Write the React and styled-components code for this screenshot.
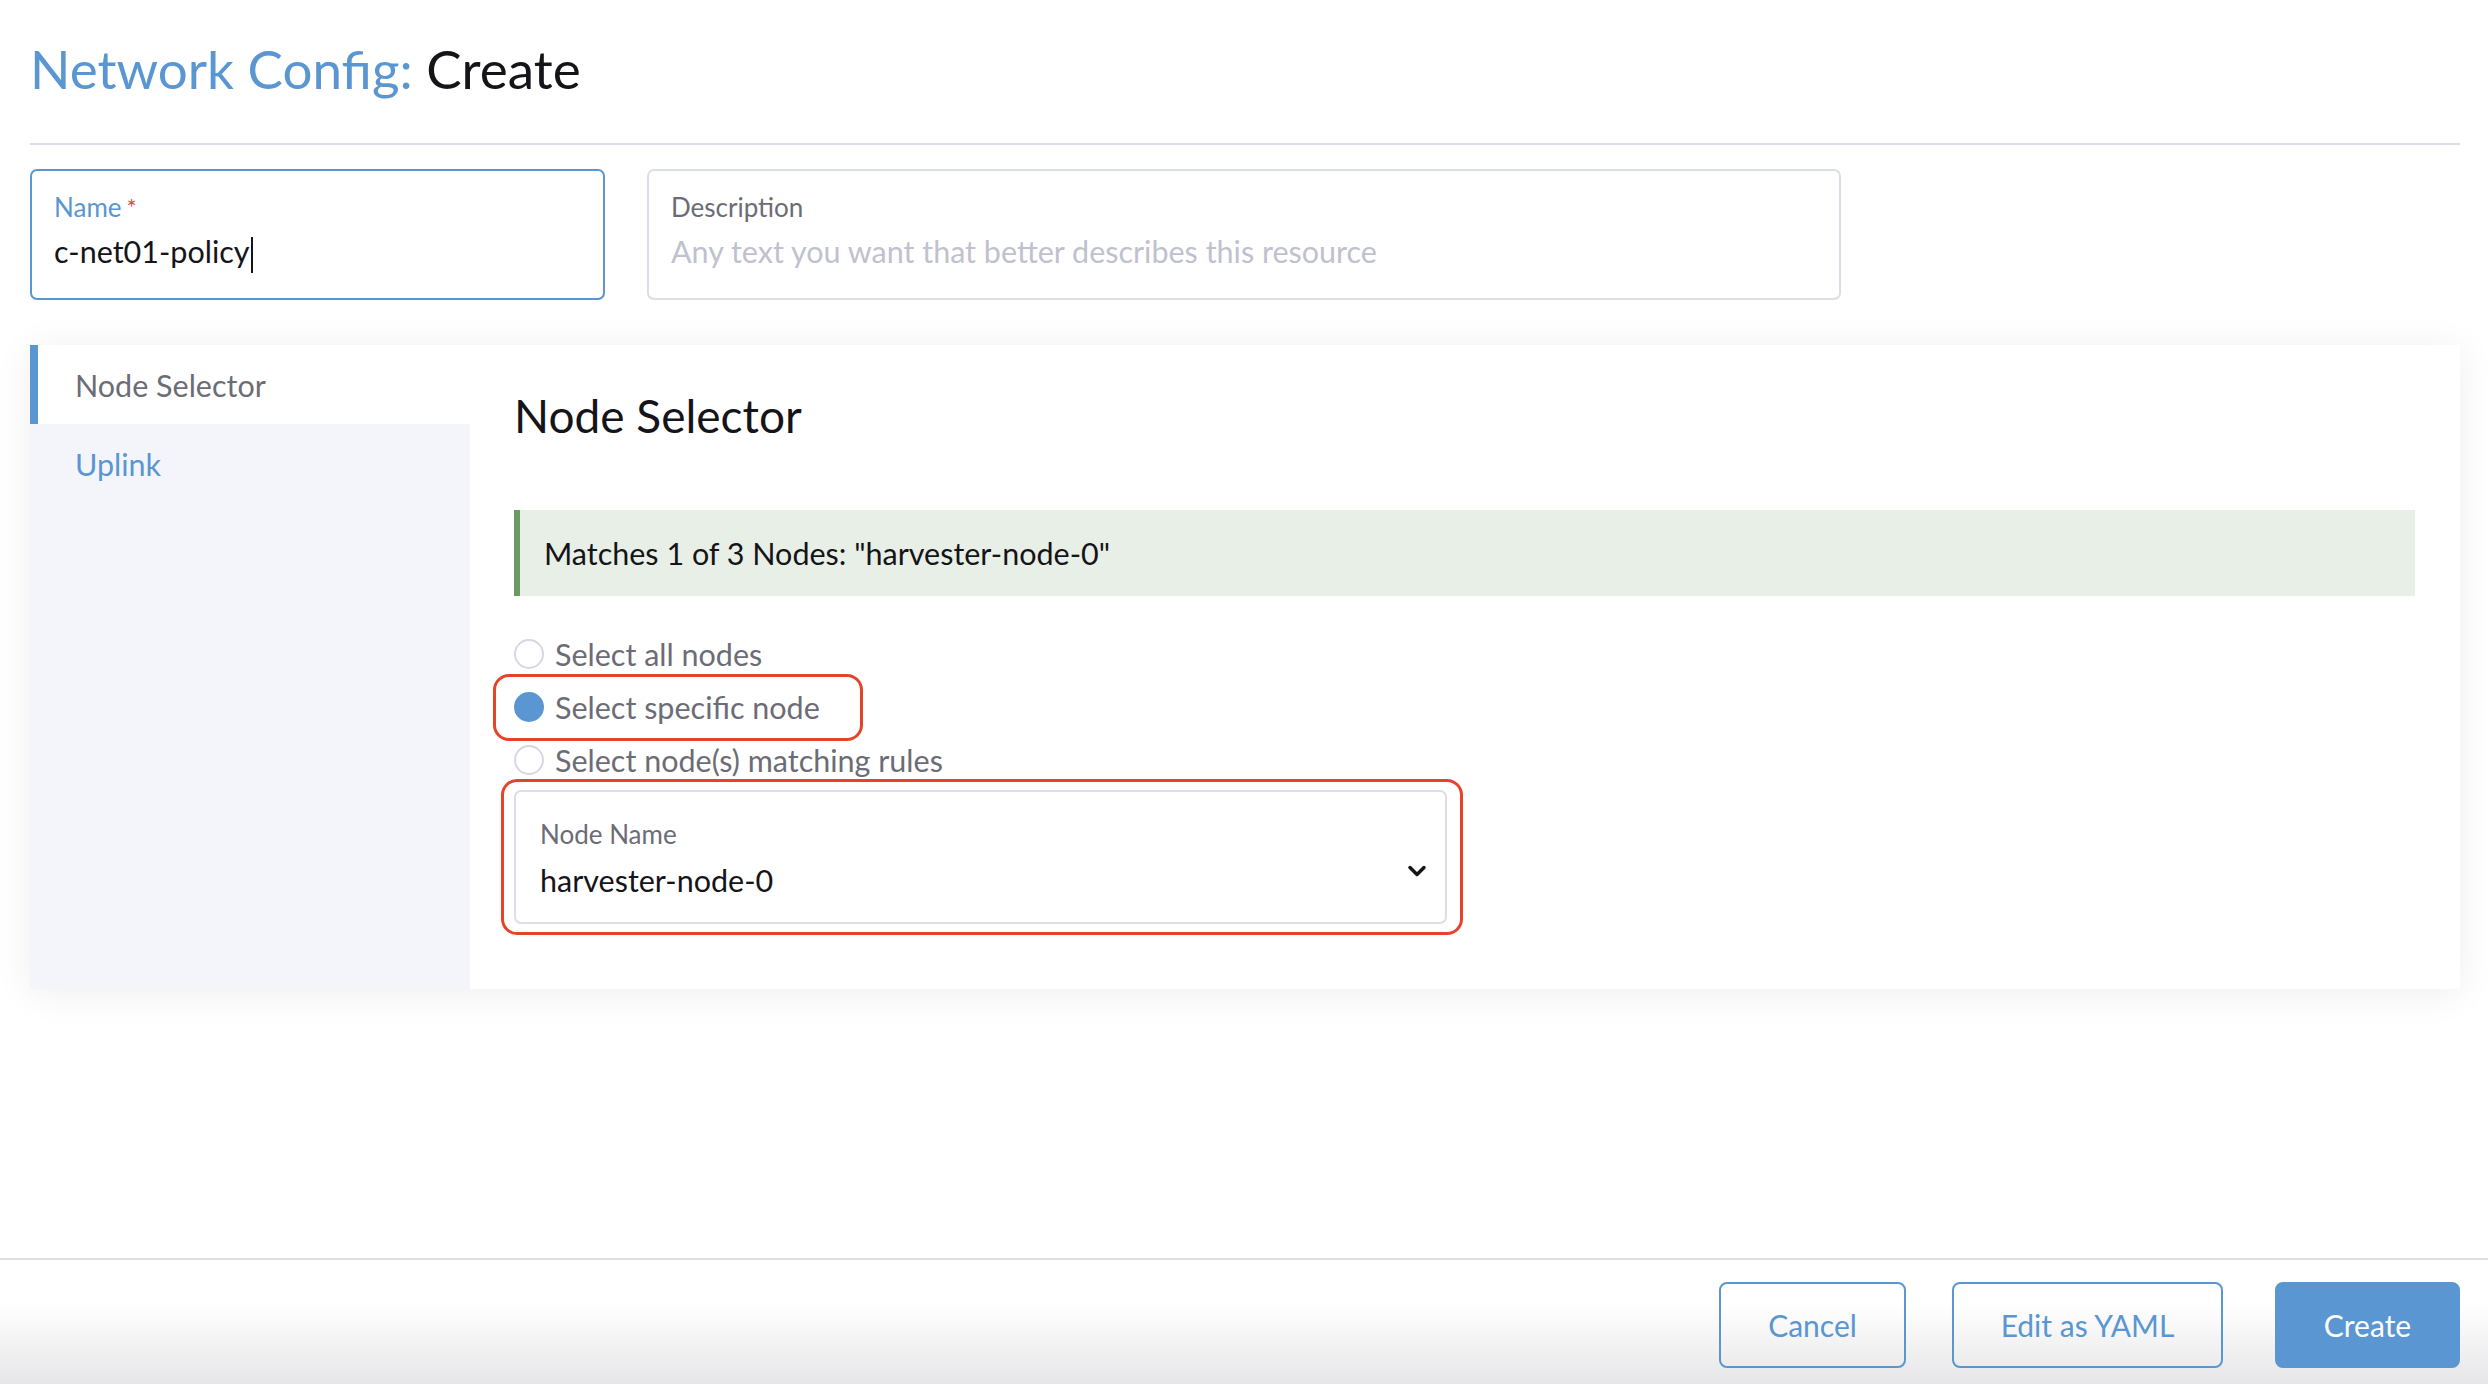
import React from 'react';
import styled, { createGlobalStyle } from 'styled-components';

const blue = '#5a96d1';
const border = '#dcdee7';
const grayText = '#6c6c76';

const GlobalStyle = createGlobalStyle`
  html, body {
    margin: 0;
    padding: 0;
    background: #fff;
    font-family: Lato, "Open Sans", "Liberation Sans", sans-serif;
    color: #141419;
  }
  * { box-sizing: border-box; }
`;

const Page = styled.div`
  min-height: 100vh;
  display: flex;
  flex-direction: column;
`;

const Content = styled.div`
  flex: 1;
  padding: 0 28px 0 30px;
`;

const Title = styled.h1`
  margin: 0;
  padding-top: 38px;
  height: 145px;
  font-size: 53px;
  font-weight: 400;
  line-height: 62px;
  border-bottom: 2px solid ${border};
  span { color: ${blue}; }
`;

const InputRow = styled.div`
  display: flex;
  gap: 42px;
  margin-top: 24px;
`;

const Field = styled.div`
  width: ${p => p.width}px;
  height: 131px;
  border: 2px solid ${p => (p.focused ? blue : border)};
  border-radius: 7px;
  padding: 20px 22px 0;
`;

const FieldLabel = styled.div`
  font-size: 26px;
  line-height: 32px;
  color: ${p => (p.focused ? blue : grayText)};
  em { color: #e0483b; font-style: normal; font-size: 24px; vertical-align: top; margin-left: 5px; }
`;

const FieldValue = styled.div`
  margin-top: 10px;
  font-size: 30.5px;
  line-height: 36px;
  color: ${p => (p.placeholder ? '#c0c1cf' : '#141419')};
`;

const Caret = styled.span`
  display: inline-block;
  width: 2px;
  height: 36px;
  background: #141419;
  vertical-align: middle;
  margin-left: 1px;
`;

const Panel = styled.div`
  display: flex;
  margin-top: 45px;
  height: 644px;
  background: #fff;
  box-shadow: 0 4px 36px rgba(20, 20, 40, 0.07);
`;

const SideNav = styled.div`
  width: 440px;
  background: #f4f5fa;
  display: flex;
  flex-direction: column;
`;

const NavItem = styled.div`
  height: 79px;
  display: flex;
  align-items: center;
  padding-left: 37px;
  font-size: 30.5px;
  border-left: 8px solid ${p => (p.active ? blue : 'transparent')};
  background: ${p => (p.active ? '#fff' : 'transparent')};
  color: ${p => (p.active ? grayText : blue)};
`;

const Main = styled.div`
  flex: 1;
  padding: 44px 45px 0 44px;
`;

const Heading = styled.h2`
  margin: 0;
  font-size: 46px;
  font-weight: 400;
  line-height: 54px;
`;

const Banner = styled.div`
  margin-top: 67px;
  height: 86px;
  background: #e8efe6;
  border-left: 6px solid #6a9a61;
  display: flex;
  align-items: center;
  padding-left: 24px;
  font-size: 30.5px;
  color: #141419;
`;

const RadioGroup = styled.div`
  margin-top: 31px;
  display: flex;
  flex-direction: column;
`;

const RadioRow = styled.div`
  position: relative;
  height: 53px;
  display: flex;
  align-items: center;
  gap: 11px;
  font-size: 30.5px;
  color: ${grayText};
  align-self: flex-start;
`;

const RadioDot = styled.span`
  width: 30px;
  height: 30px;
  border-radius: 50%;
  border: 2px solid ${p => (p.checked ? blue : '#d6d8e1')};
  background: ${p => (p.checked ? blue : '#fff')};
`;

const Highlight = styled.div`
  position: absolute;
  top: ${p => p.t}px;
  bottom: ${p => p.b}px;
  left: ${p => p.l}px;
  right: ${p => p.r}px;
  border: 3px solid #e6432b;
  border-radius: 16px;
  pointer-events: none;
`;

const SelectWrap = styled.div`
  position: relative;
  width: 933px;
  margin-top: 4px;
`;

const Select = styled.div`
  height: 134px;
  border: 2px solid ${border};
  border-radius: 7px;
  padding: 26px 14px 0 24px;
  display: flex;
  align-items: center;
  justify-content: space-between;
`;

const SelectText = styled.div`
  align-self: flex-start;
  ${FieldValue} { margin-top: 12px; }
`;

const Chevron = styled.svg`
  width: 28px;
  height: 28px;
  margin-top: 2px;
`;

const Footer = styled.div`
  border-top: 2px solid ${border};
  height: 126px;
  padding: 22px 28px 0 0;
  display: flex;
  justify-content: flex-end;
  background: linear-gradient(to bottom, #ffffff 0%, #ffffff 35%, #e6e6e8 100%);
`;

const Button = styled.button`
  height: 86px;
  width: ${p => p.width}px;
  margin-left: ${p => p.gap || 0}px;
  border-radius: 8px;
  font-family: inherit;
  font-size: 30px;
  cursor: pointer;
  border: 2px solid ${blue};
  background: ${p => (p.primary ? blue : 'transparent')};
  color: ${p => (p.primary ? '#fff' : blue)};
`;

const radios = [
  { label: 'Select all nodes', checked: false },
  { label: 'Select specific node', checked: true, mark: true },
  { label: 'Select node(s) matching rules', checked: false },
];

export default function App() {
  return (
    <Page>
      <GlobalStyle />
      <Content>
        <Title><span>Network Config:</span> Create</Title>
        <InputRow>
          <Field width={575} focused>
            <FieldLabel focused>Name<em>*</em></FieldLabel>
            <FieldValue>c-net01-policy<Caret /></FieldValue>
          </Field>
          <Field width={1194}>
            <FieldLabel>Description</FieldLabel>
            <FieldValue placeholder="1">Any text you want that better describes this resource</FieldValue>
          </Field>
        </InputRow>

        <Panel>
          <SideNav>
            <NavItem active>Node Selector</NavItem>
            <NavItem>Uplink</NavItem>
          </SideNav>
          <Main>
            <Heading>Node Selector</Heading>
            <Banner>Matches 1 of 3 Nodes: "harvester-node-0"</Banner>
            <RadioGroup>
              {radios.map(r => (
                <RadioRow key={r.label}>
                  <RadioDot checked={r.checked} />
                  {r.label}
                  {r.mark && <Highlight t={-6} b={-8} l={-21} r={-43} />}
                </RadioRow>
              ))}
            </RadioGroup>
            <SelectWrap>
              <Select>
                <SelectText>
                  <FieldLabel>Node Name</FieldLabel>
                  <FieldValue>harvester-node-0</FieldValue>
                </SelectText>
                <Chevron viewBox="0 0 24 24" fill="none" stroke="#141419" strokeWidth="3" strokeLinecap="round" strokeLinejoin="round">
                  <path d="M6 9l6 6 6-6" />
                </Chevron>
              </Select>
              <Highlight t={-11} b={-11} l={-13} r={-16} />
            </SelectWrap>
          </Main>
        </Panel>
      </Content>

      <Footer>
        <Button width={187}>Cancel</Button>
        <Button width={271} gap={46}>Edit as YAML</Button>
        <Button width={185} gap={52} primary>Create</Button>
      </Footer>
    </Page>
  );
}
